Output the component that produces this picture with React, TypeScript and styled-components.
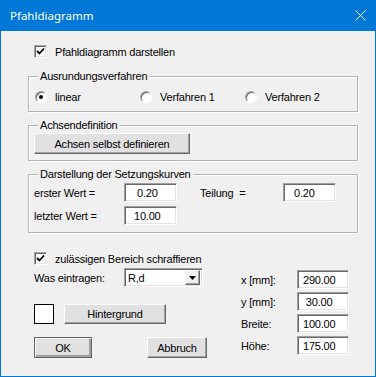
import React from 'react';
import styled, { createGlobalStyle } from 'styled-components';

const Global = createGlobalStyle`
  body {
    margin: 0;
    background: #f0f0f0;
  }
`;

const Win = styled.div`
  width: 376px;
  height: 377px;
  box-sizing: border-box;
  border: 1px solid #0078d7;
  border-top: none;
  background: #f0f0f0;
  display: flex;
  flex-direction: column;
  font-family: 'Liberation Sans', Arial, sans-serif;
  font-size: 11px;
  color: #000;
  letter-spacing: -0.2px;
`;

const TitleBar = styled.div`
  height: 31px;
  margin: 0 -1px;
  background: #0078d7;
  color: #fff;
  display: flex;
  align-items: center;
  justify-content: space-between;
  padding: 0 10px 0 10px;
  font-family: 'Noto Sans', sans-serif;
  font-size: 11.5px;
  letter-spacing: 0;
  flex-shrink: 0;
`;

const Body = styled.div`
  display: flex;
  flex-direction: column;
  padding-left: 27px;
`;

const CheckRow = styled.div<{ top: number }>`
  display: flex;
  align-items: center;
  gap: 8px;
  height: 13px;
  margin-top: ${(p) => p.top}px;
  padding-left: 6px;
`;

const Box = styled.div`
  width: 13px;
  height: 13px;
  box-sizing: border-box;
  background: #fff;
  border: 1px solid;
  border-color: #a0a0a0 #fff #fff #a0a0a0;
  box-shadow: inset 1px 1px #696969, inset -1px -1px #e3e3e3;
  display: flex;
  align-items: center;
  justify-content: center;
`;

const Group = styled.div<{ top: number; bottom: number }>`
  width: 330px;
  box-sizing: border-box;
  margin-top: ${(p) => p.top}px;
  padding-bottom: ${(p) => p.bottom}px;
  border: 1px solid #b4b4b4;
  box-shadow: inset 1px 1px #fff, 1px 1px #fff;
  display: flex;
  flex-direction: column;
`;

const Caption = styled.div`
  width: fit-content;
  margin: -7px 0 0 9px;
  padding: 0 2px;
  line-height: 13px;
  background: #f0f0f0;
`;

const RadioRow = styled.div`
  display: flex;
  margin-top: 7px;
  padding-left: 6px;
  height: 13px;
`;

const RadioItem = styled.div`
  width: 105px;
  display: flex;
  align-items: center;
  gap: 8px;
`;

const RadioCircle = styled.div`
  width: 12px;
  height: 12px;
  box-sizing: border-box;
  border-radius: 50%;
  background: #fff;
  border: 1px solid;
  border-color: #a0a0a0 #fff #fff #a0a0a0;
  box-shadow: inset 1px 1px #696969;
  display: flex;
  align-items: center;
  justify-content: center;
`;

const Dot = styled.div`
  width: 4px;
  height: 4px;
  border-radius: 50%;
  background: #000;
`;

const Button = styled.div<{ w: number; h?: number; isDefault?: boolean }>`
  width: ${(p) => p.w}px;
  height: ${(p) => p.h ?? 21}px;
  box-sizing: border-box;
  background: #e1e1e1;
  border: 1px solid;
  border-color: ${(p) => (p.isDefault ? '#646464' : '#fff #696969 #696969 #fff')};
  box-shadow: ${(p) =>
    p.isDefault
      ? 'inset 1px 1px #fff, inset -2px -2px #a0a0a0'
      : 'inset -1px -1px #a0a0a0'};
  display: flex;
  align-items: center;
  justify-content: center;
  flex-shrink: 0;
`;

const ButtonWrap = styled.div`
  padding-left: 5px;
  margin-top: 1px;
`;

const FieldRow = styled.div<{ top: number }>`
  display: flex;
  align-items: center;
  height: 19px;
  margin-top: ${(p) => p.top}px;
  padding-left: 5px;
`;

const Label = styled.div<{ w: number }>`
  width: ${(p) => p.w}px;
  flex-shrink: 0;
  white-space: pre;
`;

const Field = styled.div<{ w: number; indent?: number }>`
  width: ${(p) => p.w}px;
  height: 19px;
  box-sizing: border-box;
  background: #fff;
  border: 1px solid;
  border-color: #a0a0a0 #fff #fff #a0a0a0;
  box-shadow: inset 1px 1px #696969, inset -1px -1px #e3e3e3;
  padding-left: ${(p) => p.indent ?? 4}px;
  white-space: pre;
  display: flex;
  align-items: center;
  flex-shrink: 0;
`;

const Lower = styled.div`
  display: flex;
  margin-top: 3px;
`;

const LeftCol = styled.div`
  width: 213px;
  box-sizing: border-box;
  padding-left: 6px;
  display: flex;
  flex-direction: column;
`;

const LeftRow = styled.div<{ top: number; h: number }>`
  display: flex;
  align-items: center;
  height: ${(p) => p.h}px;
  margin-top: ${(p) => p.top}px;
`;

const Select = styled.div`
  width: 79px;
  height: 19px;
  box-sizing: border-box;
  background: #fff;
  border: 1px solid;
  border-color: #a0a0a0 #fff #fff #a0a0a0;
  box-shadow: inset 1px 1px #696969, inset -1px -1px #e3e3e3;
  display: flex;
  align-items: center;
  justify-content: space-between;
  padding: 1px 2px 1px 3px;
`;

const DropBtn = styled.div`
  width: 15px;
  height: 15px;
  box-sizing: border-box;
  background: #f0f0f0;
  border: 1px solid;
  border-color: #fff #696969 #696969 #fff;
  box-shadow: inset -1px -1px #a0a0a0;
  display: flex;
  align-items: center;
  justify-content: center;
`;

const Swatch = styled.div`
  width: 20px;
  height: 20px;
  box-sizing: border-box;
  border: 1px solid #000;
  background: #fff;
  margin-right: 10px;
`;

const RightCol = styled.div`
  display: grid;
  grid-template-columns: 56px 52px;
  grid-auto-rows: 19px;
  row-gap: 3px;
  align-items: center;
  margin-top: 2px;
`;

const CheckMark = () => (
  <svg width="9" height="9" viewBox="0 0 9 9">
    <path d="M1 4 L3.5 6.5 L8 1.5" stroke="#000" strokeWidth="1.8" fill="none" />
  </svg>
);

const CloseIcon = () => (
  <svg width="11" height="11" viewBox="0 0 11 11">
    <path d="M0.5 0.5 L10.5 10.5 M10.5 0.5 L0.5 10.5" stroke="#fff" strokeWidth="1" />
  </svg>
);

const Arrow = () => (
  <svg width="7" height="4" viewBox="0 0 7 4">
    <path d="M0 0 H7 L3.5 4 Z" fill="#000" />
  </svg>
);

const Radio = ({ label, checked }: { label: string; checked?: boolean }) => (
  <RadioItem>
    <RadioCircle>{checked && <Dot />}</RadioCircle>
    <span>{label}</span>
  </RadioItem>
);

const App = () => {
  const placement = [
    { label: 'x [mm]:', value: '290.00' },
    { label: 'y [mm]:', value: ' 30.00' },
    { label: 'Breite:', value: '100.00' },
    { label: 'Höhe:', value: '175.00' }
  ];

  return (
    <>
      <Global />
      <Win>
        <TitleBar>
          <span>Pfahldiagramm</span>
          <CloseIcon />
        </TitleBar>
        <Body>
          <CheckRow top={14}>
            <Box>
              <CheckMark />
            </Box>
            <span>Pfahldiagramm darstellen</span>
          </CheckRow>

          <Group top={18} bottom={8}>
            <Caption>Ausrundungsverfahren</Caption>
            <RadioRow>
              <Radio label="linear" checked />
              <Radio label="Verfahren 1" />
              <Radio label="Verfahren 2" />
            </RadioRow>
          </Group>

          <Group top={13} bottom={6}>
            <Caption>Achsendefinition</Caption>
            <ButtonWrap>
              <Button w={156}>Achsen selbst definieren</Button>
            </ButtonWrap>
          </Group>

          <Group top={13} bottom={7}>
            <Caption>Darstellung der Setzungskurven</Caption>
            <FieldRow top={2}>
              <Label w={90}>erster Wert =</Label>
              <Field w={53} indent={12}>0.20</Field>
              <Label w={23} />
              <Label w={83}>Teilung  =</Label>
              <Field w={53} indent={10}>0.20</Field>
            </FieldRow>
            <FieldRow top={4}>
              <Label w={90}>letzter Wert =</Label>
              <Field w={53} indent={9}>10.00</Field>
            </FieldRow>
          </Group>

          <CheckRow top={19}>
            <Box>
              <CheckMark />
            </Box>
            <span>zulässigen Bereich schraffieren</span>
          </CheckRow>

          <Lower>
            <LeftCol>
              <LeftRow top={0} h={19}>
                <Label w={90}>Was eintragen:</Label>
                <Select>
                  <span>R,d</span>
                  <DropBtn>
                    <Arrow />
                  </DropBtn>
                </Select>
              </LeftRow>
              <LeftRow top={16} h={21}>
                <Swatch />
                <Button w={102} h={20}>
                  Hintergrund
                </Button>
              </LeftRow>
              <LeftRow top={13} h={21}>
                <Button w={58} isDefault>
                  OK
                </Button>
                <Label w={55} />
                <Button w={60}>Abbruch</Button>
              </LeftRow>
            </LeftCol>
            <RightCol>
              {placement.map((p) => (
                <React.Fragment key={p.label}>
                  <Label w={56}>{p.label}</Label>
                  <Field w={52} indent={5}>
                    {p.value}
                  </Field>
                </React.Fragment>
              ))}
            </RightCol>
          </Lower>
        </Body>
      </Win>
    </>
  );
};

export default App;
